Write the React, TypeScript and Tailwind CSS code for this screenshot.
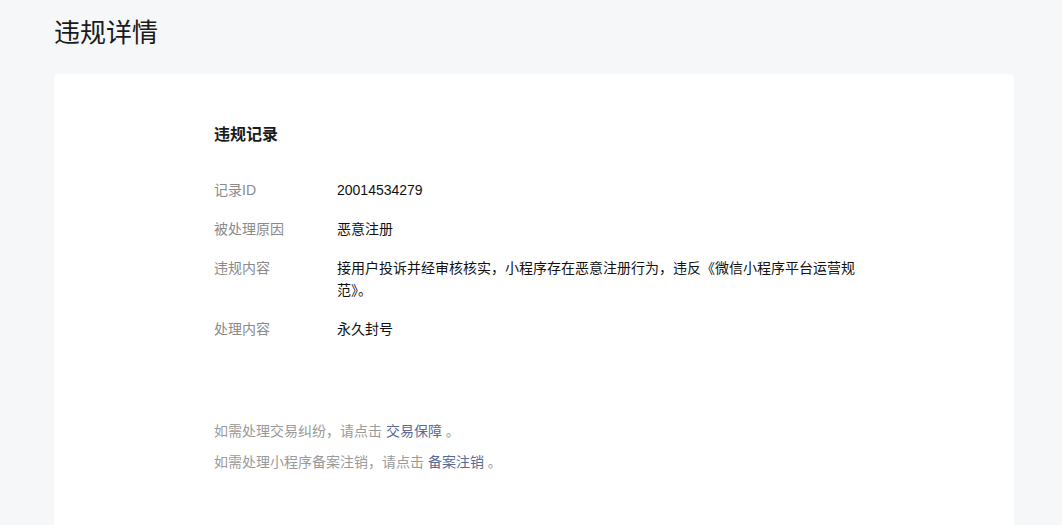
import React from 'react';

const rows = [
    { label: '记录ID', value: '20014534279' },
    { label: '被处理原因', value: '恶意注册' },
    { label: '违规内容', value: '接用户投诉并经审核核实，小程序存在恶意注册行为，违反《微信小程序平台运营规范》。' },
    { label: '处理内容', value: '永久封号' },
];

export default function App() {
    return (
        <div
            className="h-screen overflow-hidden bg-[#f6f7f9] text-[#1a1a1a] flex flex-col pl-[54px] pt-[15px]"
            style={{ fontFamily: '"Liberation Sans", "Noto Sans CJK SC", sans-serif' }}
        >
            <h1 className="text-[26px] leading-[36px] font-normal text-[#1a1a1a]">违规详情</h1>
            <div className="mt-[23px] flex-1 w-[960px] bg-white rounded-t-[4px] pl-[160px] pt-[49px]">
                <h2 className="text-[16px] leading-[24px] font-bold text-[#1a1a1a]">违规记录</h2>
                <div className="mt-[32px] flex flex-col gap-[17px]">
                    {rows.map((row) => (
                        <div key={row.label} className="flex text-[14px] leading-[22px]">
                            <div className="w-[123px] shrink-0 text-[#8a8a8a]">{row.label}</div>
                            <div className="w-[530px] text-[#111]">{row.value}</div>
                        </div>
                    ))}
                </div>
                <div className="mt-[80px] flex flex-col gap-[9px] text-[14px] leading-[22px] text-[#9a9a9a]">
                    <p>
                        如需处理交易纠纷，请点击 <a className="text-[#576b95]">交易保障</a> 。
                    </p>
                    <p>
                        如需处理小程序备案注销，请点击 <a className="text-[#576b95]">备案注销</a> 。
                    </p>
                </div>
            </div>
        </div>
    );
}
